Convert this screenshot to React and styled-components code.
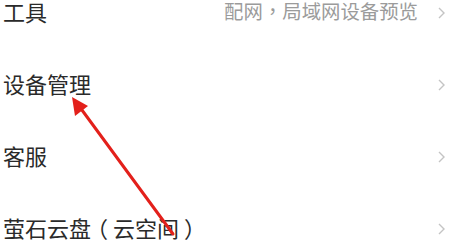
import React from 'react'
import styled, { createGlobalStyle } from 'styled-components'

const GlobalStyle = createGlobalStyle`
  html, body {
    margin: 0;
    padding: 0;
    background: #ffffff;
    overflow: hidden;
  }
  body {
    font-family: "Noto Sans CJK SC", "Noto Sans", sans-serif;
  }
`

const Page = styled.div`
  position: relative;
  width: 452px;
  height: 249px;
  overflow: hidden;
  background: #ffffff;
`

const List = styled.div`
  display: flex;
  flex-direction: column;
  margin-top: -25px;
`

const Row = styled.div`
  display: flex;
  align-items: center;
  justify-content: space-between;
  height: 72px;
  padding: 0 7px 0 3px;
`

const Title = styled.span`
  font-size: 22px;
  color: #2a2a2a;
  line-height: 1;
  white-space: nowrap;
  flex-shrink: 0;
`

const Right = styled.div`
  display: flex;
  align-items: center;
  gap: 20px;
`

const Hint = styled.span`
  font-size: 19.4px;
  color: #9b9b9b;
  line-height: 1;
  white-space: nowrap;
`

// full-width punctuation sits centred in its cell in the reference
const Comma = styled.span`
  font-family: "Noto Sans CJK TC", sans-serif;
`

const Paren = styled.span`
  margin-left: ${(p) => p.$shift}px;
  margin-right: ${(p) => -p.$shift}px;
`

const Chevron = styled.svg`
  width: 7px;
  height: 12px;
  display: block;
  margin-top: 3px;
`

const Annotation = styled.svg`
  position: absolute;
  left: 0;
  top: 0;
  pointer-events: none;
`

const withPunct = (text) =>
  text.split(/([，（）])/).map((part, i) => {
    if (part === '，') return <Comma key={i}>{part}</Comma>
    if (part === '（') return <Paren key={i} $shift={-5}>{part}</Paren>
    if (part === '）') return <Paren key={i} $shift={5}>{part}</Paren>
    return part
  })

const items = [
  { title: '工具', hint: '配网，局域网设备预览' },
  { title: '设备管理' },
  { title: '客服' },
  { title: '萤石云盘（云空间）' },
]

export default function App() {
  return (
    <Page>
      <GlobalStyle />
      <List>
        {items.map((it) => (
          <Row key={it.title}>
            <Title>{withPunct(it.title)}</Title>
            <Right>
              {it.hint && <Hint>{withPunct(it.hint)}</Hint>}
              <Chevron viewBox="0 0 7 12">
                <path d="M1 1 L6 6 L1 11" fill="none" stroke="#c4c4c4" strokeWidth="1.4" />
              </Chevron>
            </Right>
          </Row>
        ))}
      </List>
      <Annotation width="452" height="249" viewBox="0 0 452 249">
        <line x1="173" y1="234" x2="79" y2="106" stroke="#e3201b" strokeWidth="3" strokeLinecap="round" />
        <polygon points="72,97 88,106 75,116" fill="#e3201b" />
      </Annotation>
    </Page>
  )
}
